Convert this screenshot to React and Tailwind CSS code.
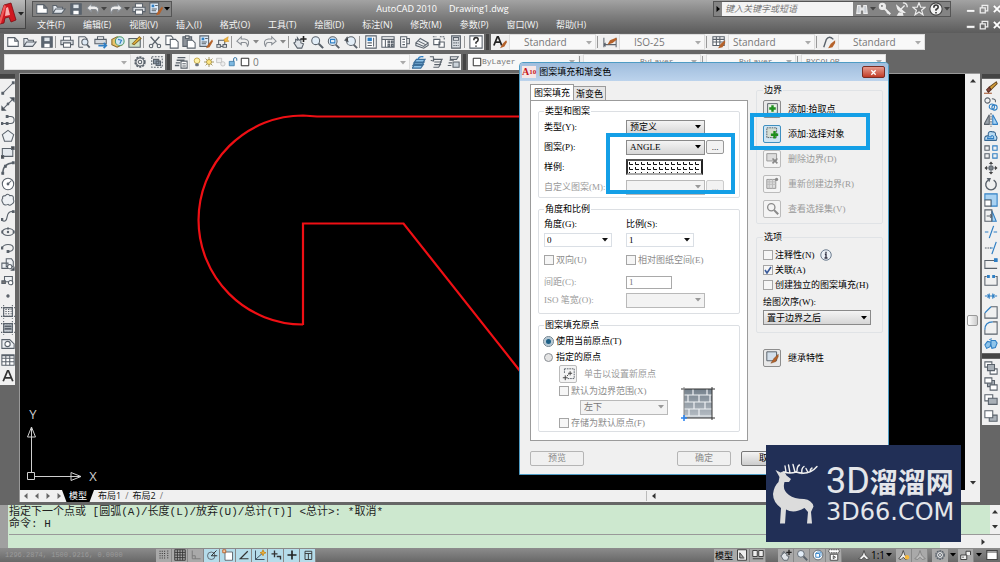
import React from "react";

const CJK = "font-['Liberation_Serif','Noto_Sans_CJK_SC',sans-serif]";
const UI = "font-['Open_Sans','Noto_Sans_CJK_SC',sans-serif]";

/* ---------- icon drawings, all on a 16 x 16 grid ---------- */

const B = "#2f7fc4";
const O = "#b5622a";

const drawings = {
  new: <path d="M2 3h8l4 4v6H2zM10 3v4h4" fill="#fff" />,
  open: <path d="M1 13V4h4l1 2h6v2M1 13l3-5h11l-4 5z" fill="#e3e8ee" />,
  save: (
    <>
      <path d="M2 2h12v12H2z" fill="#5b6570" />
      <path d="M5 3h6v4H5z" fill="#dfe5ea" stroke="none" />
      <path d="M5 10h6v4H5z" fill="#fff" stroke="none" />
    </>
  ),
  print: (
    <>
      <path d="M4 6V2h8v4" fill="#fff" />
      <path d="M1 6h14v5H1z" fill="#d5d9dd" />
      <path d="M4 9h8v5H4z" fill="#fff" />
    </>
  ),
  preview: (
    <>
      <path d="M2 14V2h7l3 3M2 14h5" />
      <circle cx="9" cy="8" r="3.500" fill="#dfeaf5" />
      <path d="M11.500 11l3 3.500" strokeWidth="2" />
    </>
  ),
  publish: (
    <>
      <path d="M4 5V2h7v3" fill="#fff" />
      <path d="M1 5h13v5H1z" fill="#d5d9dd" />
      <path d="M5 12h9M11 9l3 3-3 3" stroke={B} strokeWidth="2" />
    </>
  ),
  cube: (
    <>
      <path d="M1 5l6-3 6 3v6l-6 3-6-3z" fill="#e9c46a" stroke="#8a6a2a" />
      <circle cx="10" cy="7" r="5" fill="#cfe6f5" stroke="#4d9a6b" />
      <path d="M8 5l4 1-2 4" stroke={B} />
    </>
  ),
  sheetEdit: (
    <>
      <path d="M1 4h13v10H1z" fill="#cfe3c4" />
      <path d="M5 10l8-8 2 2-8 7z" fill="#f0c33c" stroke="#8a6a2a" />
    </>
  ),
  cut: (
    <>
      <path d="M3 2l8 9M13 2L5 11" strokeWidth="1.600" />
      <circle cx="3.500" cy="12.500" r="2" />
      <circle cx="12.500" cy="12.500" r="2" />
    </>
  ),
  copy: (
    <>
      <path d="M1 1h6l2 2v8H1z" fill="#fff" />
      <path d="M6 5h6l3 3v7H6z" fill="#fff" />
    </>
  ),
  paste: (
    <>
      <path d="M1 2h10v11H1z" fill="#8c9299" />
      <path d="M4 1h4v3H4z" fill="#ddd" />
      <path d="M6 6h6l3 3v6H6z" fill="#fff" />
    </>
  ),
  match: (
    <>
      <path d="M1 1h10v12H1z" fill="#dbe9f7" />
      <path d="M3 3h3v3H3z" fill={B} stroke="none" />
      <path d="M7 4h3M3 8h6M3 10h5" />
      <path d="M15 5l-5 6-2 4 4-1 4-7z" fill={O} stroke="none" />
    </>
  ),
  block: (
    <>
      <path d="M3 6h7v7H3z" />
      <path d="M1 11h4v3H1zM8 11h4v3H8z" fill="#fff" />
      <path d="M9 5l5-3-1 4 2 1-5 1z" fill="#f3b63c" stroke="#c88a1e" strokeWidth=".6" />
    </>
  ),
  undo: <path d="M6 2L1 7l5 4V8.500h4q3 0 3 5 4-8-3-9H6z" fill="#eee" stroke="#8a8f95" />,
  redo: <path d="M10 2l5 5-5 4V8.500H6q-3 0-3 5-4-8 3-9h4z" fill="#eee" stroke="#8a8f95" />,
  pan: (
    <>
      <path d="M3 8V5l2 1V3l2 3 2-1v4l3 1-2 5H5L1 9z" fill="#dfe3e8" />
      <path d="M12 1v7M8.500 4.500h7" strokeWidth="1.800" stroke="#222" />
    </>
  ),
  zoom: (
    <>
      <circle cx="6.500" cy="6.500" r="4.500" fill="#e3eef8" />
      <path d="M10 10l5 5" strokeWidth="2.400" />
    </>
  ),
  zoomWindow: (
    <>
      <circle cx="6.500" cy="7" r="5" fill="#e3eef8" />
      <path d="M4 5h5v4H4z" stroke={B} />
      <path d="M10 11l4 4" strokeWidth="2.200" />
    </>
  ),
  zoomPrev: (
    <>
      <circle cx="8" cy="7" r="5" fill="#e3eef8" />
      <path d="M4 2L1 6l4 2" fill="#444" />
      <path d="M11 11l4 4" strokeWidth="2.200" />
    </>
  ),
  props: (
    <>
      <path d="M2 1h12v14H2z" fill="#fff" />
      <path d="M4 3h5v4H4z" fill={B} stroke="none" />
      <path d="M11 3v10M4 9h5M4 12h5" />
    </>
  ),
  center: (
    <>
      <path d="M1 2h14v12H1z" fill="#fff" />
      <path d="M1 5h14M5 5v9M8 7h2v2H8zM12 7h2v2h-2zM8 11h2v2H8zM12 11h2v2h-2z" />
    </>
  ),
  palette: (
    <>
      <path d="M3 2h7v12H3z" fill="#fff" />
      <path d="M10 4h3v6h-3M5 5h3M5 8h3M5 11h3" />
    </>
  ),
  sheetSet: <path d="M1 9l5-5 9 5-5 4zM1 9v3l9 3 5-3V9M4 7l8 4" fill="#e8ebee" />,
  markup: (
    <>
      <path d="M2 5h7v6H2zM8 8h6v6H8z" fill="#fff" />
      <path d="M1 2h4M9 2h5v4" strokeDasharray="2 1" />
    </>
  ),
  calc: (
    <>
      <path d="M3 1h10v14H3z" fill="#d8dde2" />
      <path d="M5 3h6v3H5z" fill="#fff" />
      <path d="M5 9h6M5 12h6" strokeDasharray="1.500 1" />
    </>
  ),
  help: (
    <>
      <path d="M1 1h14v14H1z" fill="#fff" />
      <path d="M5.500 6q0-3 2.500-3t2.500 2.500Q10.500 7 8 8.500V10M8 12v1.500" strokeWidth="1.800" stroke="#333" />
    </>
  ),
  textStyle: (
    <>
      <path d="M1 12L5 2h1l4 10M3 8h5" strokeWidth="2" stroke="#222" />
      <path d="M15 6l-4 4-3 5 5-2 3-5z" fill={O} stroke="none" />
    </>
  ),
  dimStyle: (
    <>
      <path d="M1 3v11M15 3v11M1 11h14M3 9l-2 2 2 2" />
      <path d="M15 3l-7 3-3 5 6-2 5-4z" fill={O} stroke="none" />
    </>
  ),
  tableStyle: (
    <>
      <path d="M1 2h13v10H1z" fill="#fff" />
      <path d="M1 5h13M1 8h13M5 2v10M9 2v10" />
      <path d="M15 6l-5 4-3 5 5-1 3-5z" fill={O} stroke="none" />
    </>
  ),
  leaderStyle: (
    <>
      <path d="M2 14L5 5q3-5 8 0" strokeWidth="1.600" />
      <path d="M15 6l-5 4-3 5 5-1 3-5z" fill={O} stroke="none" />
    </>
  ),
  gear: (
    <>
      <circle cx="8" cy="8" r="5.500" strokeWidth="2" strokeDasharray="2.400 1.100" />
      <circle cx="8" cy="8" r="4.600" fill="#eee" />
      <circle cx="8" cy="8" r="2" />
    </>
  ),
  workspace: (
    <>
      <path d="M2 2h12v12H2z" strokeDasharray="2 1.500" />
      <path d="M4 5h6v5H4zM7 7h5v5H7z" fill="#8d99a8" />
    </>
  ),
  layers: (
    <>
      <path d="M4 3h9M3 6h9M2 9h5M1 12h5" strokeWidth="1.500" />
      <path d="M8 7h7v8H8z" fill="#fff" />
      <path d="M9.500 10h4M9.500 12.500h4" />
    </>
  ),
  bulb: (
    <>
      <circle cx="8" cy="6" r="4.500" fill="#fff2a8" stroke="#b8962e" />
      <path d="M6 11h4v3H6z" fill="#7c8590" />
    </>
  ),
  sun: (
    <>
      <path d="M8 0v16M0 8h16M2.500 2.500l11 11M13.500 2.500l-11 11" stroke="#8b7b3c" />
      <circle cx="8" cy="8" r="4" fill="#ffe681" stroke="#a08a3a" />
    </>
  ),
  vpFreeze: (
    <>
      <path d="M1 2h8v7H1z" stroke="#bbb" fill="#eee" />
      <circle cx="11" cy="11" r="3.500" stroke="#bbb" fill="#eee" />
    </>
  ),
  lock: (
    <>
      <path d="M2 7h8v7H2z" fill="#7db8e0" stroke="#3674a2" />
      <path d="M9 7V3q0-2 2.500-2T14 3v3" stroke="#3674a2" strokeWidth="1.600" />
    </>
  ),
  swatch: <path d="M2 2h12v12H2z" fill="#fff" stroke="#222" strokeWidth="1.500" />,
  layerA: (
    <>
      <path d="M5 5h10l-3 4H2zM4 8h10l-3 4H1zM3 11h10l-3 4H0z" fill="#8fc4ea" stroke="#3c6f9a" />
      <path d="M7 5q1-4 6-3" stroke={B} strokeWidth="1.500" />
    </>
  ),
  layerB: <path d="M6 5h9l-2 3H6M8 8h6l-2 3H7M6 11h7l-2 3H5M1 2h4v4M2 6l3 1 1-3" />,
  layerC: (
    <>
      <path d="M5 2h9l-2 3H5zM4 6h5M3 9h4M2 12h4" fill="#eee" />
      <path d="M8 8h7v6H8z" fill="#cbd3da" />
    </>
  ),
  binoculars: <path d="M2 13l1-9h3v3h4V4h3l1 9h-4V9H6v4z" fill="#c9ced4" stroke="#eee" />,
  key: (
    <>
      <circle cx="5" cy="5" r="3.500" fill="#eee" stroke="#eee" />
      <circle cx="4.500" cy="4.500" r="1" fill="#666" stroke="none" />
      <path d="M7 7l7 7M12 11l-1.500 2" stroke="#eee" strokeWidth="2.400" />
    </>
  ),
  dish: (
    <>
      <path d="M2 4q1 8 9 8zM5 12l-2 3h6l-1-3" fill="#eee" stroke="#eee" />
      <path d="M7 8l4-4M9 1q5 0 5 5" stroke="#eee" strokeWidth="1.500" />
    </>
  ),
  star: <path d="M8 1l2 5h5l-4 3.500 1.500 5L8 11.500l-4.500 3 1.500-5L1 6h5z" fill="#777" stroke="#eee" strokeWidth="1.400" />,
  helpRound: (
    <>
      <circle cx="8" cy="8" r="7" fill="#f2f2f2" stroke="#444" />
      <path d="M5.500 6.500q0-3 2.500-3T10.500 6Q10.500 7.500 8 8.500V10M8 11.500V13" stroke="#333" strokeWidth="1.800" />
    </>
  ),
  min: <path d="M1 9h13v4H1z" fill="#fff" stroke="#555" strokeWidth=".6" />,
  restore: <path d="M5 5V2h9v9h-3M2 6h8v8H2z" stroke="#eee" strokeWidth="2" />,
  close: <path d="M3 3l10 10M13 3L3 13" stroke="#fff" strokeWidth="3" />,
  line: (
    <>
      <path d="M2 14L14 2" />
      <path d="M1 13h2v2H1zM13 1h2v2h-2z" fill="#555" />
    </>
  ),
  xline: (
    <>
      <path d="M1 15L15 1" />
      <path d="M1 11v4h4zM11 1h4v4z" fill="#333" />
      <circle cx="8" cy="8" r="1" fill="#555" />
    </>
  ),
  pline: (
    <>
      <path d="M1 12h10q4 0 4-4t-4-4H7" />
      <path d="M0 11h2v2H0zM6 11h2v2H6zM6 3h2v2H6z" fill="#555" />
    </>
  ),
  polygon: <path d="M8 1.500l6.500 5L12 14H4L1.500 6.500z" fill="#eef1f4" />,
  rect: (
    <>
      <path d="M1.500 4h12v9h-12z" fill="#e4e9ee" />
      <path d="M0 12h3v3H0zM12 2h3v3h-3z" fill="#444" />
    </>
  ),
  arc: (
    <>
      <path d="M2 14q0-11 12-12" strokeWidth="1.500" />
      <path d="M1 13h2v2H1zM13 1h2v2h-2zM4 5h2v2H4z" fill="#444" />
    </>
  ),
  circle: (
    <>
      <circle cx="8" cy="8" r="6.500" fill="#fff" />
      <path d="M8 8l4-4" />
      <circle cx="8" cy="8" r="1" fill="#444" />
    </>
  ),
  cloud: <path d="M5 3q3-3 5 0 5-1 4 4 2 4-2 6-2 2-4 0-5 2-6-2-2-3 0-5-1-3 3-3z" fill="#eef1f4" />,
  spline: (
    <>
      <path d="M1 13q5 3 6-4t7-6" strokeWidth="1.300" />
      <path d="M0 11h2v2H0zM13 2h2v2h-2z" fill="#555" />
    </>
  ),
  ellipse: (
    <>
      <ellipse cx="8" cy="8" rx="6.500" ry="4" />
      <path d="M1 7h1v2H1zM14 7h1v2h-1zM7.500 3.500h1v1h-1z" fill="#333" />
      <circle cx="8" cy="8" r=".8" fill="#333" />
    </>
  ),
  ellipseArc: (
    <>
      <path d="M1 8q2-4 7-4 6 0 6 4t-6 4" />
      <path d="M7 11h2v2H7zM0 7h2v2H0z" fill="#333" />
    </>
  ),
  insert: (
    <>
      <path d="M6 2h6l2 3v6H6zM1 7h7v6H1z" fill="#eef1f4" />
      <circle cx="10" cy="11" r="2.500" fill="#fff" />
      <path d="M12 15h3v-3z" fill="#111" />
    </>
  ),
  makeBlock: (
    <>
      <path d="M4 4h9v6H4z" fill="#eef1f4" />
      <circle cx="11" cy="11" r="2.500" fill="#fff" />
      <path d="M1 9h4v3H1z" fill="#777" />
    </>
  ),
  point: <circle cx="8" cy="8" r="1.300" fill="#666" />,
  hatch: (
    <>
      <path d="M3 3h10v10H3z" />
      <path d="M5 5h7M5 7.500h7M5 10h7M3 0v16M13 0v16M0 3h16M0 13h16" strokeDasharray="1.500 1.500" />
    </>
  ),
  gradient: (
    <>
      <path d="M3 3h10v10H3z" fill="#c5cbd1" />
      <path d="M4 6h8M4 9h8" strokeWidth="2" />
      <path d="M3 0v16M13 0v16M0 3h16M0 13h16" strokeDasharray="1.500 1.500" />
    </>
  ),
  region: (
    <>
      <path d="M1 3h9l5 5v5H1z" fill="#eef1f4" />
      <circle cx="7.500" cy="8" r="3" fill="#fff" />
    </>
  ),
  table: (
    <>
      <path d="M1 2h14v12H1z" fill="#fff" />
      <path d="M1 3h14M1 6h14M1 10h14M5.500 3v11M10 3v11" />
    </>
  ),
  mtext: <path d="M2.500 14L7.500 2h1l5 12M4.500 10h7" strokeWidth="2" stroke="#333" />,
  erase: (
    <>
      <path d="M14 1L6 7l2 3 7-7z" fill="#d8a13a" stroke="#6b4b1f" />
      <path d="M6 7l-3 3 2 3 3-3z" fill="#8a4a3a" stroke="#5a2d22" />
      <path d="M0 14h9" stroke="#a4562f" />
    </>
  ),
  copyObj: (
    <>
      <circle cx="4" cy="4" r="3" />
      <path d="M9 2q5 0 4 4" />
      <circle cx="9" cy="11" r="3" stroke={B} />
      <circle cx="12" cy="12" r="3" stroke={B} />
    </>
  ),
  mirror: (
    <>
      <path d="M6 2v11H0z" fill="#9aa2aa" />
      <path d="M10 2v11h6z" fill="#a9d2f2" stroke={B} />
      <path d="M8 0v16" strokeDasharray="2 1" />
    </>
  ),
  offset: (
    <>
      <path d="M1 13q-1-6 4-5-1-6 4-5 5 0 4 4 3 2 1 6z" fill="#b9dbf3" stroke="#35658f" />
      <path d="M4 11q0-3 4-2 1-3 3 0v2z" stroke={B} />
    </>
  ),
  array: (
    <>
      <path d="M1 1h5v5H1zM1 10h5v5H1z" />
      <path d="M10 1h5v5h-5zM10 10h5v5h-5z" stroke={B} />
    </>
  ),
  move: (
    <>
      <path d="M8 2v12M2 8h12M6 6h4v4H6z" />
      <path d="M5.500 3.500L8 .5l2.500 3zM5.500 12.500l2.500 3 2.500-3zM3.500 5.500L.5 8l3 2.500zM12.500 5.500l3 2.500-3 2.500z" fill="#444" stroke="none" />
    </>
  ),
  rotate: (
    <>
      <path d="M5 3.500a6 6 0 1 0 6 0" strokeWidth="1.600" />
      <path d="M3 1h5L6 6z" fill="#5a626b" stroke="none" />
    </>
  ),
  scale: (
    <>
      <path d="M1 1h14v14H8V8H1z" fill="#a9d2f2" stroke={B} />
      <path d="M1 8h7v7H1z" fill="#fff" />
    </>
  ),
  stretch: (
    <>
      <path d="M9 2l5 12H9z" fill="#a9d2f2" stroke={B} />
      <path d="M1 1h8v13H1zM3 8h6M7 6l2 2-2 2" />
    </>
  ),
  trim: <path d="M1 8h4M11 8h4M11 1L6 15" stroke={B} strokeWidth="1.400" />,
  extend: (
    <>
      <path d="M1 8h7" strokeDasharray="2 1" />
      <path d="M14 1L9 15M7 8h3" stroke={B} strokeWidth="1.400" />
    </>
  ),
  breakPt: (
    <>
      <path d="M13 4H1v9h14" />
      <path d="M12 2h3v3h-3z" fill={B} stroke={B} />
    </>
  ),
  breakTwo: (
    <>
      <path d="M3 4H1v10h14V4h-2" />
      <path d="M4 3h2v2H4zM10 3h2v2h-2z" fill={B} stroke={B} />
    </>
  ),
  join: <path d="M1 8h14M6 5v6M10 5v6M4 6l2 2-2 2M12 6l-2 2 2 2" stroke={B} />,
  chamfer: (
    <>
      <path d="M8 2h7v13H1V9" />
      <path d="M1 9l7-7" stroke={B} strokeWidth="1.500" />
    </>
  ),
  fillet: (
    <>
      <path d="M10 1h5v14H1v-5" />
      <path d="M1 10q0-9 9-9" stroke={B} strokeWidth="1.500" />
    </>
  ),
  explode: <path d="M1 9l3-4 4 1-1 5-4 2zM8 4h5l2 3-2 5-4 1-1-4zM6 3l3-1" fill="#8fc4ea" stroke={B} />,
  orderFront: (
    <>
      <path d="M1 1h8v6H1zM7 9h8v6H7z" fill="#fff" />
      <path d="M4 4h8v7H4z" fill="#a9b0b7" />
    </>
  ),
  orderBack: (
    <>
      <path d="M4 4h8v7H4z" fill="#a9b0b7" />
      <path d="M1 1h8v6H1zM7 9h8v6H7z" fill="#fff" />
    </>
  ),
  orderAbove: (
    <>
      <path d="M1 2h9v7H1z" fill="#fff" />
      <path d="M5 6h10v7H5z" fill="#a9b0b7" />
    </>
  ),
  orderUnder: (
    <>
      <path d="M6 7h9v7H6z" fill="#a9b0b7" />
      <path d="M1 2h9v8H1z" fill="#fff" />
    </>
  ),
  pickPoint: (
    <>
      <path d="M2 2h12v12H2z" fill="#e8f2e4" />
      <path d="M8 4v8M4 8h8" stroke="#1f8f1f" strokeWidth="3" />
    </>
  ),
  pickObject: (
    <>
      <path d="M1 1h12v12H1z" fill="#d5ddd2" strokeDasharray="2 1" />
      <path d="M10.500 5v9M6 9.500h9" stroke="#1f8f1f" strokeWidth="3" />
    </>
  ),
  removeBoundary: (
    <>
      <path d="M1 2h12v9H1z" fill="#ddd" stroke="#999" />
      <path d="M8 8l6 6M14 8l-6 6" stroke="#888" strokeWidth="2" />
    </>
  ),
  recreate: (
    <>
      <path d="M1 3h11v11H1z" fill="#ddd" stroke="#999" />
      <path d="M1 6h11M1 9h11M4 3v11M8 3v11" stroke="#bbb" />
      <circle cx="13" cy="3" r="2" fill="#888" stroke="none" />
    </>
  ),
  viewSet: (
    <>
      <circle cx="6.500" cy="6.500" r="4.500" fill="#f4f4f4" stroke="#8a8a8a" strokeWidth="1.600" />
      <path d="M10 10l5 5" stroke="#8a8a8a" strokeWidth="2.600" />
    </>
  ),
  inherit: (
    <>
      <path d="M1 1h12v11H1z" fill="#d3dfeb" />
      <path d="M15 4l-5 5-4 6 6-2 3-6z" fill={O} stroke="#7a4a26" strokeWidth=".6" />
    </>
  ),
  origin: (
    <>
      <path d="M3 1h12v12H7M3 1v6" strokeDasharray="2 1" />
      <path d="M4 9v6M1 12h6M10 4v5M7.500 6.500h5M6 10l2-2" stroke="#444" />
    </>
  ),
  info: (
    <>
      <circle cx="8" cy="8" r="7" fill="#eaf0f6" stroke="#5d6f83" />
      <path d="M8 3.500v2M6.500 7H8v5M6 12h4" strokeWidth="1.800" stroke="#334" />
    </>
  ),
  snap: <path d="M2 3h9M2 6h9M2 9h9M2 12h9M13 2v12" strokeDasharray="1.500 1.500" stroke="#333" />,
  grid: <path d="M1 1h14v14H1zM1 4.500h14M1 8h14M1 11.500h14M4.500 1v14M8 1v14M11.500 1v14" stroke="#333" />,
  ortho: <path d="M3 2v11h11M3 9h4v4" stroke="#777" />,
  polar: (
    <>
      <circle cx="7" cy="9" r="5" />
      <path d="M7 9l7-7M7 9h8" stroke="#222" />
    </>
  ),
  osnap: (
    <>
      <path d="M4 4h10v11H4z" fill="#fff" />
      <path d="M1 1h4v4H1z" fill="#f5c9a5" stroke={O} />
    </>
  ),
  otrack: <path d="M13 3L3 13h11" strokeWidth="1.600" stroke="#333" />,
  ducs: (
    <>
      <path d="M2 2v12h12M2 14L12 5" stroke="#345" />
      <path d="M12 1l1 3 3 1-3 1-1 3-1-3-3-1 3-1z" fill="#f3b63c" stroke="#c88a1e" />
    </>
  ),
  dyn: <path d="M6 2v9M2 6.500h8M9 10h5v4" strokeWidth="1.800" stroke="#333" />,
  lwt: <path d="M8 2v12M2 8h12" strokeWidth="2.200" stroke="#222" />,
  qp: <path d="M4 3h9v11H4zM4 6h9M8.500 6v8" stroke="#333" />,
  layout: <path d="M2 1h12v14H2zM5 5v7h6M5 5l5 6" stroke="#333" fill="#eee" />,
  quickView: <path d="M1 2h6v8H1zM9 2h6v8H9zM1 13h14" stroke="#333" fill="#eee" />,
  wheel: (
    <>
      <circle cx="8" cy="8" r="6.500" fill="#fff" />
      <path d="M5 6h5v5H5zM5 6l2-2h5v5l-2 2" stroke={B} />
    </>
  ),
  motion: (
    <>
      <path d="M1 1h14v4H1z" fill="#fff" stroke="#444" strokeDasharray="2 1" />
      <path d="M3 7h10v8H3zM7 9l3 2-3 2z" fill="#fff" stroke="#444" />
    </>
  ),
  anno: <path d="M8 2l2 6 5 5-4 1-3-3-3 3-4-1 5-5z" fill="#f0f0f0" stroke="#444" />,
  annoSun: (
    <>
      <path d="M7 2l2 6 4 5-3 1-3-3-3 3-3-1 4-5z" fill="#f0f0f0" stroke="#444" />
      <circle cx="12" cy="11" r="3" fill="#f3b63c" stroke="none" />
    </>
  ),
  annoOff: <path d="M8 2l2 6 5 5-4 1-3-3-3 3-4-1 5-5z" stroke="#808080" fill="#bbb" />,
  lockGrey: <path d="M1 8h8v6H1zM8 8V3h6v5M4 10v2" stroke="#333" fill="#eee" />,
  clean: <path d="M1 2h14v12H1zM1 4h14" stroke="#444" strokeWidth="1.500" fill="#fff" />,
};

function Icon({ name, className = "size-4" }) {
  return (
    <svg viewBox="0 0 16 16" fill="none" stroke="#5a626b" strokeWidth="1.200" className={className} aria-hidden="true">
      {drawings[name]}
    </svg>
  );
}

function Caret({ className = "text-[#666]", dir = "down" }) {
  const d = { down: "M0 1h6L3 4.500z", up: "M0 4.500h6L3 1z", left: "M4.500 0v6L1 3z", right: "M1.500 0v6L5 3z" }[dir];
  return (
    <svg viewBox="0 0 6 6" className={`size-1.5 shrink-0 ${className}`} aria-hidden="true">
      <path d={d} fill="currentColor" />
    </svg>
  );
}

/* ---------- shared controls ---------- */

function Tool({ name, className = "h-full w-[17px]", icon = "size-3.5" }) {
  return (
    <button type="button" aria-label={name} className={`flex shrink-0 items-center justify-center ${className}`}>
      <Icon name={name} className={icon} />
    </button>
  );
}

const Tools = ({ names }) => names.map((n) => <Tool key={n} name={n} />);
const Sep = () => <div className="h-3 w-[3px] shrink-0 border-l border-[#999]" />;
const Grip = () => <div className="w-[7px] shrink-0 border-x-2 border-[#666] bg-[#444]" />;

function Picker({ id, label, value, className = "", select = "", caret = "text-[#111]", disabled }) {
  return (
    <div className={`grid items-center ${className}`}>
      <select
        id={id}
        aria-label={label}
        disabled={disabled}
        defaultValue={value}
        className={`col-start-1 row-start-1 h-full w-full min-w-0 appearance-none bg-transparent opacity-100 outline-none ${select}`}
      >
        <option>{value}</option>
      </select>
      <span className="pointer-events-none col-start-1 row-start-1 justify-self-end pr-[3px]">
        <Caret className={caret} />
      </span>
    </div>
  );
}

const BarPicker = ({ label, value, className = "", select = "text-[10px]" }) => (
  <Picker
    label={label}
    value={value}
    caret="text-[#aaa]"
    className={`h-full border border-[#ddd] bg-[#f8f8f8] ${className}`}
    select={`text-[#777] ${select}`}
  />
);

/* ---------- application header ---------- */

const menus = ["文件(F)", "编辑(E)", "视图(V)", "插入(I)", "格式(O)", "工具(T)", "绘图(D)", "标注(N)", "修改(M)", "参数(P)", "窗口(W)", "帮助(H)"];

function WindowButtons() {
  return (
    <div className="-mr-[2px] flex h-4 items-center gap-[3px]">
      {["min", "restore", "close"].map((n) => (
        <Tool key={n} name={n} className="size-2.5" icon="size-2.5" />
      ))}
    </div>
  );
}

function Header() {
  return (
    <header className="flex h-[33px] shrink-0 bg-linear-to-b from-[#a3a3a3] via-[#7d7d7d] to-[#5c5c5c]">
      <button
        type="button"
        aria-label="应用程序菜单"
        className="flex h-[29px] w-[26px] shrink-0 items-center border-r border-b border-[#444] bg-linear-to-b from-[#bbb] to-[#777]"
      >
        <svg viewBox="0 0 18 26" className="h-[26px] w-[18px]" aria-hidden="true">
          <path d="M0 23V17L4 4l7-2 5 17-5 2-2-5-4 1-1 5z" fill="#cf1820" stroke="#7c0d12" strokeWidth=".8" />
          <path d="M6 7l2-1 2 8-5 1z" fill="#f7b0b0" />
          <path d="M4 4l2 1-5 17-1 1V17z" fill="#ef5a5a" />
        </svg>
        <Caret className="text-[#222]" />
      </button>
      <div className="flex min-w-0 flex-1 flex-col">
        <div className="flex h-[17px] items-center justify-between">
          <div className="ml-[6px] flex h-4 items-center border border-[#555] bg-[#848484] pr-px">
            <Tools names={["new", "open", "save", "undo"]} />
            <Caret className="text-[#444]" />
            <Tool name="redo" />
            <Caret className="text-[#444]" />
            <Tools names={["print", "match"]} />
            <Caret className="text-black" />
          </div>
          <h1 className={`flex gap-3 text-[9px] text-white ${UI}`}>
            <span>AutoCAD 2010</span>
            <span>Drawing1.dwg</span>
          </h1>
          <div className="flex items-center gap-[15px]">
            <div className="flex h-4 w-[238px] items-center border border-[#555] bg-[#848484]">
              <span className="flex w-2 justify-center">
                <Caret dir="right" className="text-black" />
              </span>
              <input
                aria-label="搜索"
                placeholder="键入关键字或短语"
                className={`h-full w-[131px] bg-[#f4f4f4] px-[3px] text-[9px] italic outline-none placeholder:text-[#777] ${UI}`}
              />
              <Tool name="binoculars" />
              <Caret className="text-[#444]" />
              <Tools names={["key", "dish", "star", "helpRound"]} />
              <Caret className="text-[#444]" />
            </div>
            <WindowButtons />
          </div>
        </div>
        <div className="flex h-4 items-center justify-between">
          <nav className={`flex gap-[18px] pl-[11px] text-[9px] text-[#f4f4f4] ${UI}`}>
            {menus.map((m) => (
              <a key={m} href="#menu">
                {m}
              </a>
            ))}
          </nav>
          <WindowButtons />
        </div>
      </div>
    </header>
  );
}

/* ---------- toolbars ---------- */

function Toolbars() {
  return (
    <div className={`flex shrink-0 flex-col gap-1 overflow-hidden bg-[#666] pt-px pb-[3px] pl-1 ${UI}`}>
      <div className="flex h-4">
        <div className="flex items-center bg-[#f0f0f0]">
          <Tools names={["new", "open", "save"]} />
          <Sep />
          <Tools names={["print", "preview", "publish", "cube", "sheetEdit"]} />
          <Sep />
          <Tools names={["cut", "copy", "paste", "match", "block"]} />
          <Sep />
          <Tool name="undo" />
          <span className="flex w-2.5 justify-center"><Caret className="text-[#888]" /></span>
          <Tool name="redo" />
          <span className="flex w-2.5 justify-center"><Caret className="text-[#888]" /></span>
          <Sep />
          <Tools names={["pan", "zoom", "zoomWindow", "zoomPrev"]} />
          <Sep />
          <Tools names={["props", "center", "palette", "sheetSet", "markup", "calc"]} />
          <Sep />
          <Tool name="help" />
        </div>
        <Grip />
        <div className="flex items-center gap-px bg-[#f0f0f0]">
          <Tool name="textStyle" />
          <BarPicker label="文字样式" value="Standard" className="w-[87px]" select="pl-3.5 text-[10px]" />
          <Sep />
          <Tool name="dimStyle" />
          <BarPicker label="标注样式" value="ISO-25" className="w-[86px]" select="pl-3.5 text-[10px]" />
          <Sep />
          <Tool name="tableStyle" />
          <BarPicker label="表格样式" value="Standard" className="w-[87px]" select="pl-1 text-[10px]" />
          <Sep />
          <Tool name="leaderStyle" />
          <BarPicker label="多重引线样式" value="Standard" className="w-[87px]" select="pl-3.5 text-[10px]" />
        </div>
      </div>
      <div className="flex h-4">
        <div className="flex items-center bg-[#f0f0f0]">
          <BarPicker label="工作空间" value="" className="w-[127px]" />
          <Tools names={["gear", "workspace"]} />
        </div>
        <Grip />
        <div className="flex items-center bg-[#f0f0f0]">
          <Tool name="layers" />
          <div className="flex h-full w-[221px] items-center border border-[#ddd] bg-[#f8f8f8] pl-px">
            {["bulb", "sun", "vpFreeze", "lock", "swatch"].map((n) => (
              <Tool key={n} name={n} className="h-full w-3" icon="size-2.5" />
            ))}
            <BarPicker label="图层" value="0" className="min-w-0 flex-1 border-0" select="pl-[2px] text-[10px]" />
          </div>
          <Tools names={["layerA", "layerB", "layerC"]} />
        </div>
        <Grip />
        <div className="flex items-center gap-px bg-[#f0f0f0] font-['Liberation_Mono',monospace]">
          <div className="flex h-full w-[110px] items-center bg-[#f8f8f8] pl-1">
            <Icon name="swatch" className="size-2.5" />
            <BarPicker label="颜色" value="ByLayer" className="min-w-0 flex-1 border-0" select="text-[8px]" />
          </div>
          <Sep />
          <BarPicker label="线型" value="ByLayer" className="w-[118px]" select="pl-14 text-[8px]" />
          <Sep />
          <BarPicker label="线宽" value="ByLayer" className="w-[90px]" select="pl-8 text-[8px]" />
          <Sep />
          <BarPicker label="打印样式" value="BYCOLOR" className="w-[85px]" select="pl-1 text-[8px]" />
        </div>
      </div>
    </div>
  );
}

const drawTools = ["line", "xline", "pline", "polygon", "rect", "arc", "circle", "cloud", "spline", "ellipse", "ellipseArc", "insert", "makeBlock", "point", "hatch", "gradient", "region", "table", "mtext"];
const modifyTools = ["erase", "copyObj", "mirror", "offset", "array", "move", "rotate", "scale", "stretch", "trim", "extend", "breakPt", "breakTwo", "join", "chamfer", "fillet", "explode"];
const orderTools = ["orderFront", "orderBack", "orderAbove", "orderUnder"];

function SideGroup({ names, icon = "size-3.5" }) {
  return (
    <div className="flex flex-col bg-[#f0f0f0] pb-px">
      <div className="mb-px h-[6px] border-y border-[#666] bg-[#444]" />
      {names.map((n) => (
        <Tool key={n} name={n} className="h-4 w-full" icon={icon} />
      ))}
    </div>
  );
}

/* ---------- drawing area ---------- */

function Canvas() {
  return (
    <svg className="block h-full w-full bg-black font-['Open_Sans',sans-serif]" role="img" aria-label="模型空间">
      <g fill="none" stroke="#ef0f14" strokeWidth="2.200">
        <path d="M283 250.500A104.500 104.500 0 0 1 283 41.500L297 42.500H500" />
        <path d="M283 251V149.500H383.500L500 297" />
      </g>
      <g fill="none" stroke="#cfcfcf">
        <path d="M7.500 398.500h7v7h-7zM11.500 398V363M15 402.500H51" />
        <path d="M11.500 353l4 10h-8zM11.500 353v10M51 398.500l10 4-10 4zM51 402.500h10" />
      </g>
      <g fill="#cfcfcf" fontSize="13" textAnchor="middle">
        <text x="13" y="345">Y</text>
        <text x="73" y="407">X</text>
      </g>
    </svg>
  );
}

function Workspace() {
  return (
    <div className="flex min-h-0 flex-1 gap-[2px] bg-[#666]">
      <div className="w-[15px] shrink-0">
        <SideGroup names={drawTools} />
      </div>
      <main className="ml-[2px] flex min-w-0 flex-1 flex-col border-t border-l border-[#999]">
        <div className="flex min-h-0 flex-1">
          <div className="min-h-0 min-w-0 flex-1 overflow-hidden">
            <Canvas />
          </div>
          <div className="flex w-[15px] shrink-0 flex-col items-center bg-[#f0f0f0] py-1">
            <Caret dir="up" className="text-[#333]" />
            <div className="flex-3" />
            <div className="h-[11px] w-[11px] rounded-[2px] border border-[#999] bg-linear-to-r from-white to-[#ccc]" />
            <div className="flex-2" />
            <Caret className="text-[#333]" />
          </div>
        </div>
        <div className={`flex h-3 shrink-0 items-center bg-[#f0f0f0] text-[9px] text-[#111] ${UI}`}>
          <div className="flex items-center gap-[5px] pl-[3px] text-[#555]">
            <Caret dir="left" />
            <Caret dir="left" />
            <Caret dir="right" />
            <Caret dir="right" />
          </div>
          <button type="button" className="h-full bg-black px-[7px] leading-3 text-white [clip-path:polygon(0_0,100%_0,86%_100%,14%_100%)]">
            模型
          </button>
          <button type="button" className="px-1 leading-3">布局1</button>
          <span className="text-[#777]">/</span>
          <button type="button" className="px-1 leading-3">布局2</button>
          <span className="text-[#777]">/</span>
          <span className="ml-auto h-2.5 w-[334px] border-l border-[#bbb] pt-[2px] pl-1">
            <Caret dir="left" className="text-[#333]" />
          </span>
        </div>
      </main>
      <div className="w-[18px] shrink-0 bg-[#666]">
        <SideGroup names={modifyTools} />
        <SideGroup names={orderTools} />
      </div>
    </div>
  );
}

/* ---------- command line and status bar ---------- */

function CommandLine() {
  return (
    <section className="flex h-[46px] shrink-0 border-t-3 border-[#666] bg-[#cde8cf]">
      <div className="w-2 shrink-0 bg-[#a0a0a0]" />
      <div className="flex min-w-0 flex-1 flex-col pl-px">
        <div className="flex flex-1">
          <div className="min-w-0 flex-1 pt-px font-['Liberation_Mono','Noto_Sans_CJK_SC',monospace] text-[11px] leading-3 text-[#222]">
            <p>指定下一个点或 [圆弧(A)/长度(L)/放弃(U)/总计(T)] &lt;总计&gt;: *取消*</p>
            <p>命令: H</p>
          </div>
          <div className="flex w-2.5 flex-col items-center justify-around bg-[#f0f0f0]">
            <Caret dir="up" className="text-[#333]" />
            <Caret className="text-[#333]" />
          </div>
        </div>
        <div className="flex h-[14px] border-t border-[#999]">
          <input aria-label="命令" className="min-w-0 flex-1 bg-transparent outline-none" />
          <div className="flex w-[60px] items-center justify-end bg-[#f0f0f0] pr-[14px]">
            <Caret dir="right" className="text-[#333]" />
          </div>
        </div>
      </div>
    </section>
  );
}

function StatusBar() {
  const cell = "h-[13px] w-4 border-r border-[#888]";
  return (
    <footer className={`flex h-[14px] shrink-0 items-center overflow-hidden bg-linear-to-b from-[#8c8c8c] to-[#686868] text-[9px] ${UI}`}>
      <span className="w-[156px] pl-[5px] font-['Liberation_Mono',monospace] text-[7px] text-[#9a9a9a]">1296.2874, 1500.9216, 0.0000</span>
      {["snap", "grid", "ortho"].map((n) => (
        <Tool key={n} name={n} className={`${cell} bg-[#a9a9a9]`} icon="size-3" />
      ))}
      {["polar", "osnap", "otrack", "ducs", "dyn", "lwt", "qp"].map((n) => (
        <Tool key={n} name={n} className={`${cell} bg-[#b5dcea]`} icon="size-3" />
      ))}
      <div className="ml-auto flex items-center">
        <button type="button" className="h-[13px] bg-[#a9a9a9] px-px leading-[13px] text-black">模型</button>
        <Tool name="layout" className={`${cell} bg-[#a9a9a9]`} icon="size-3" />
        <Tool name="quickView" className={`${cell} bg-[#a9a9a9]`} icon="size-3" />
        <div className="w-3" />
        {["pan", "zoom", "wheel", "motion"].map((n) => (
          <Tool key={n} name={n} className={`${cell} bg-[#a9a9a9]`} icon="size-3" />
        ))}
        <div className="flex w-[50px] items-center justify-end gap-px text-[10px] leading-3 text-black">
          <Icon name="anno" className="size-3" />
          1:1
          <Caret className="text-black" />
        </div>
        <div className="w-1" />
        <Tool name="annoSun" className={`${cell} bg-[#a9a9a9]`} icon="size-3" />
        <Tool name="annoOff" className={`${cell} bg-[#a9a9a9]`} icon="size-3" />
        <div className="w-1" />
        <Tool name="gear" className="h-[13px] w-4 bg-[#a9a9a9]" icon="size-3" />
        <span className="flex w-[10px] justify-center"><Caret className="text-black" /></span>
        <Tool name="lockGrey" className={`${cell} bg-[#a9a9a9]`} icon="size-3" />
        <span className="flex w-[10px] justify-center"><Caret className="text-black" /></span>
        <Tool name="clean" className="h-[13px] w-4" icon="size-3" />
      </div>
    </footer>
  );
}

/* ---------- hatch dialog ---------- */

function Group({ title, className = "", children }) {
  return (
    <fieldset className={`min-w-0 rounded-[2px] border border-[#dcdfe3] pl-[5px] ${className}`}>
      <legend className="h-3 px-px leading-3">{title}</legend>
      {children}
    </fieldset>
  );
}

const Label = ({ htmlFor, off, children }) => (
  <label htmlFor={htmlFor} className={`w-[82px] shrink-0 ${off ? "text-[#9a9a9a]" : ""}`}>
    {children}
  </label>
);

const DialogPicker = ({ off, className = "w-[79px]", ...rest }) => (
  <Picker
    {...rest}
    disabled={off}
    caret={off ? "text-[#999]" : "text-black"}
    className={`h-[15px] border ${off ? "border-[#b9b9b9] bg-[#f3f3f3] text-[#777]" : "border-[#8a8a8a] bg-linear-to-b from-[#f4f4f4] to-[#d6d6d6]"} ${className}`}
    select="px-[3px]"
  />
);

const ValuePicker = ({ id, value }) => (
  <Picker id={id} value={value} className="h-[14px] w-[68px] border border-[#dadfe5] bg-white" select="px-[2px]" />
);

function Check({ label, off, checked, children }) {
  return (
    <label className={`flex items-center gap-[2px] ${off ? "text-[#8b8b8b]" : ""}`}>
      <span className="grid">
        <input
          type="checkbox"
          defaultChecked={checked}
          disabled={off}
          className="peer col-start-1 row-start-1 size-[10px] appearance-none border border-[#a5a5a5] bg-[#f6f6f6]"
        />
        <svg viewBox="0 0 10 10" className="pointer-events-none invisible col-start-1 row-start-1 size-[10px] peer-checked:visible" aria-hidden="true">
          <path d="M2 5l2 3 4-6" fill="none" stroke="#3a5a9a" strokeWidth="1.600" />
        </svg>
      </span>
      {label}
      {children}
    </label>
  );
}

const Radio = ({ label, checked }) => (
  <label className="flex h-4 items-center gap-[3px]">
    <input
      type="radio"
      name="origin"
      defaultChecked={checked}
      className="size-[9px] appearance-none rounded-full border border-[#8a8f95] bg-[#e4e4e4] checked:border-2 checked:border-[#b5c8d4] checked:bg-[#1c5f86] checked:outline checked:outline-[#6d7f8c]"
    />
    {label}
  </label>
);

const More = ({ off }) => (
  <button type="button" aria-label="浏览" disabled={off} className={`ml-px h-[14px] w-[18px] rounded-[2px] border bg-[#f2f2f2] leading-[8px] ${off ? "border-[#ccc] text-[#aaa]" : "border-[#999]"}`}>
    ...
  </button>
);

function Action({ icon, text, off, active, className = "h-[25px]" }) {
  return (
    <div className={`flex items-center ${className}`}>
      <button
        type="button"
        disabled={off}
        className={`flex items-center gap-[7px] ${off ? "text-[#9a9a9a]" : ""}`}
      >
        <span className={`flex size-[18px] items-center justify-center rounded-[2px] border ${active ? "border-[#3f8fc0] bg-[#cfe6f4]" : off ? "border-[#bbb] bg-[#f4f4f4]" : "border-[#8d8d8d] bg-[#e8e8e8]"}`}>
          <Icon name={icon} className="size-[13px]" />
        </span>
        {text}
      </button>
    </div>
  );
}

function Bricks() {
  return (
    <svg viewBox="0 0 34 34" className="mt-3 size-[34px]" aria-hidden="true">
      <defs>
        <linearGradient id="brick" x1="0" y1="0" x2="0" y2="1">
          <stop offset="0" stopColor="#75818c" />
          <stop offset="1" stopColor="#b8bfc6" />
        </linearGradient>
      </defs>
      <path d="M3 2h28v29H3z" fill="url(#brick)" />
      <path d="M3 8h28M3 15h28M3 22h28M3 29h28M12 2v6M26 2v6M7 8v7M18 8v7M29 8v7M13 15v7M24 15v7M8 22v7M18 22v7" stroke="#eef1f4" strokeWidth="1.200" fill="none" />
      <path d="M31 0v33M0 2h34M3 31h31" stroke="#333" fill="none" />
      <path d="M3 0v31" stroke="#888" />
      <path d="M3 28v6M0 31h6" stroke="#2f86f0" strokeWidth="1.600" />
    </svg>
  );
}

function Sample() {
  return (
    <svg className="block h-[16px] w-[77px] border-2 border-t-[#555] border-r-[#222] border-b-[#aaa] border-l-[#333] bg-white" role="img" aria-label="ANGLE">
      <defs>
        <pattern id="angle" width="6" height="5" patternUnits="userSpaceOnUse">
          <path d="M1.500 1v2.500h3.500" fill="none" stroke="#111" />
        </pattern>
      </defs>
      <rect width="100%" height="100%" fill="url(#angle)" />
    </svg>
  );
}

function HatchPanel() {
  return (
    <div className="flex flex-col gap-[5px] border border-[#9b9b9b] bg-white px-[7px] pt-1 pb-2">
      <Group title="类型和图案">
        <div className="flex h-5 items-center">
          <Label htmlFor="type">类型(Y):</Label>
          <DialogPicker id="type" value="预定义" />
        </div>
        <div className="flex h-5 items-center">
          <Label htmlFor="pattern">图案(P):</Label>
          <DialogPicker id="pattern" value="ANGLE" />
          <More />
        </div>
        <div className="flex h-5 items-center">
          <span className="w-[82px]">样例:</span>
          <Sample />
        </div>
        <div className="flex h-5 items-center">
          <Label htmlFor="custom" off>自定义图案(M):</Label>
          <DialogPicker id="custom" value="" off />
          <More off />
        </div>
      </Group>
      <Group title="角度和比例" className="pb-1">
        <div className="flex">
          <div className="w-[82px]">
            <label htmlFor="angleValue" className="block h-[18px] leading-[18px]">角度(G):</label>
            <ValuePicker id="angleValue" value="0" />
          </div>
          <div>
            <label htmlFor="scaleValue" className="block h-[18px] leading-[18px]">比例(S):</label>
            <ValuePicker id="scaleValue" value="1" />
          </div>
        </div>
        <div className="my-[3px] flex h-5 items-center">
          <div className="w-[82px]"><Check label="双向(U)" off /></div>
          <Check label="相对图纸空间(E)" off />
        </div>
        <div className="flex h-[18px] items-center">
          <Label htmlFor="spacing" off>间距(C):</Label>
          <input id="spacing" disabled defaultValue="1" className="h-[13px] w-[46px] border border-[#a9a9a9] bg-white px-[2px] text-[#777]" />
        </div>
        <div className="flex h-[18px] items-center">
          <Label htmlFor="pen" off>ISO 笔宽(O):</Label>
          <DialogPicker id="pen" value="" off />
        </div>
      </Group>
      <Group title="图案填充原点">
        <div className="pt-[2px]">
          <Radio label="使用当前原点(T)" checked />
          <Radio label="指定的原点" />
        </div>
        <div className="flex items-center gap-[13px] pl-[15px]">
          <div className="text-[#777]">
            <Action icon="origin" text="单击以设置新原点" off className="h-[18px]" />
            <div className="flex h-4 items-center"><Check label="默认为边界范围(X)" off /></div>
            <div className="flex h-4 items-center pl-[21px]">
              <DialogPicker label="默认范围" value="左下" off className="w-[88px]" />
            </div>
            <div className="flex h-4 items-center"><Check label="存储为默认原点(F)" off /></div>
          </div>
          <Bricks />
        </div>
      </Group>
    </div>
  );
}

function HatchDialog() {
  const button = "h-[15px] w-[54px] rounded-[2px] border leading-[13px]";
  return (
    <section
      role="dialog"
      aria-label="图案填充和渐变色"
      className={`absolute top-[62px] left-[519px] flex w-[370px] flex-col rounded-t-[4px] border border-[#4f9cc4] bg-[#f0f0f0] text-[9px] leading-3 text-black ${CJK}`}
    >
      <header className="flex h-[18px] items-center justify-between rounded-t-[3px] bg-linear-to-b from-[#9fbddd] to-[#bcd3ec] pr-[3px] pl-[2px]">
        <div className="flex items-center gap-[3px]">
          <span className="flex h-3 items-center bg-[#f6e6e6] text-[7px] font-bold text-[#c5161d]">
            <span className="text-[10px]">A</span>10
          </span>
          <h2>图案填充和渐变色</h2>
        </div>
        <button type="button" aria-label="关闭" className="flex h-3 w-[23px] items-center justify-center rounded-[2px] border border-[#7a2c22] bg-linear-to-b from-[#e79a8d] to-[#c03a26]">
          <Icon name="close" className="size-[7px]" />
        </button>
      </header>
      <div className="flex gap-2 px-[10px] pt-[3px]">
        <div className="w-[218px] shrink-0">
          <div role="tablist" className="flex items-end">
            <button type="button" role="tab" aria-selected="true" className="h-4 border border-b-0 border-[#9b9b9b] bg-white px-[3px]">图案填充</button>
            <button type="button" role="tab" aria-selected="false" className="h-[14px] border border-b-0 border-l-0 border-[#9b9b9b] bg-[#e6e6e6] px-[2px]">渐变色</button>
          </div>
          <HatchPanel />
        </div>
        <div className="w-[127px] shrink-0">
          <Group title="边界" className="border-[#e0e3e6] pb-[2px] pl-[6px]">
            <Action icon="pickPoint" text="添加:拾取点" />
            <Action icon="pickObject" text="添加:选择对象" active />
            <Action icon="removeBoundary" text="删除边界(D)" off />
            <Action icon="recreate" text="重新创建边界(R)" off />
            <Action icon="viewSet" text="查看选择集(V)" off />
          </Group>
          <Group title="选项" className="mt-[7px] border-[#e0e3e6] pt-1 pb-[7px] pl-[6px]">
            <div className="flex h-[15px] items-center">
              <Check label="注释性(N)"><Icon name="info" className="ml-[3px] size-3" /></Check>
            </div>
            <div className="flex h-[15px] items-center"><Check label="关联(A)" checked /></div>
            <div className="flex h-[15px] items-center"><Check label="创建独立的图案填充(H)" /></div>
            <label htmlFor="order" className="mt-[2px] block h-4 leading-4">绘图次序(W):</label>
            <DialogPicker id="order" value="置于边界之后" className="w-[108px]" />
          </Group>
          <Action icon="inherit" text="继承特性" className="mt-3 h-[25px] pl-[7px]" />
        </div>
      </div>
      <footer className="flex items-center px-[10px] pt-[10px] pb-[8px]">
        <button type="button" disabled className={`${button} border-[#b5b5b5] text-[#888]`}>预览</button>
        <button type="button" disabled className={`${button} mr-[10px] ml-auto border-[#b5b5b5] text-[#888]`}>确定</button>
        <button type="button" className={`${button} mr-[83px] border-[#777] bg-linear-to-b from-[#f4f4f4] to-[#ccc]`}>取消</button>
      </footer>
    </section>
  );
}

/* ---------- brand badge ---------- */

function Badge() {
  return (
    <aside className="absolute top-[445px] left-[766px] flex h-[97px] w-[195px] items-center gap-2 bg-[#212f56] pl-[6px] text-[#e4e6ea]">
      <svg viewBox="6 17 46 62" className="h-[62px] w-[46px] shrink-0" aria-hidden="true">
        <path
          d="M9.500 24l5 2.500L18 25l2.500 4.500L25 33l-2 3h-4.500Q16 44 23 49q5 4 15 4 8 1 9.500 7.500L45 66l1 11.500h-5L42 66l-3.500-4Q28 68 20 63.500L19 77.500h-5L15 62Q7 56 7 48q1-8 5.500-12l1-5z"
          fill="#dcdcdc"
        />
        <path
          d="M18 26q6 2 12 0 13 4 21-5.500M20 26l-1-6M24 27l-1.500-8M29 26l-2-7.500M31 25q0-5 2.500-6M36 27.500q-1-5 2-7M42 26.500l-2-4M44 26q0-3 2-4"
          fill="none"
          stroke="#f0f0f0"
          strokeWidth="1.400"
          strokeLinecap="round"
        />
      </svg>
      <div className="flex flex-col gap-px">
        <div className="flex h-9 items-center">
          <span className="font-['Roboto',sans-serif] text-[36px] leading-9">3D</span>
          <span className="font-['Noto_Sans_CJK_SC',sans-serif] text-[28px] leading-9 font-bold">溜溜网</span>
        </div>
        <span className="font-['DejaVu_Sans',sans-serif] text-[24px] leading-6">3D66.COM</span>
      </div>
    </aside>
  );
}

export default function App() {
  return (
    <div className="relative flex h-screen flex-col overflow-hidden bg-[#666]">
      <Header />
      <Toolbars />
      <Workspace />
      <CommandLine />
      <StatusBar />
      <HatchDialog />
      <div className="pointer-events-none absolute top-[133px] left-[606px] h-[61px] w-[129px] border-4 border-[#149fe6]" />
      <div className="pointer-events-none absolute top-[113px] left-[750px] h-[37px] w-[120px] border-4 border-[#149fe6]" />
      <Badge />
    </div>
  );
}
